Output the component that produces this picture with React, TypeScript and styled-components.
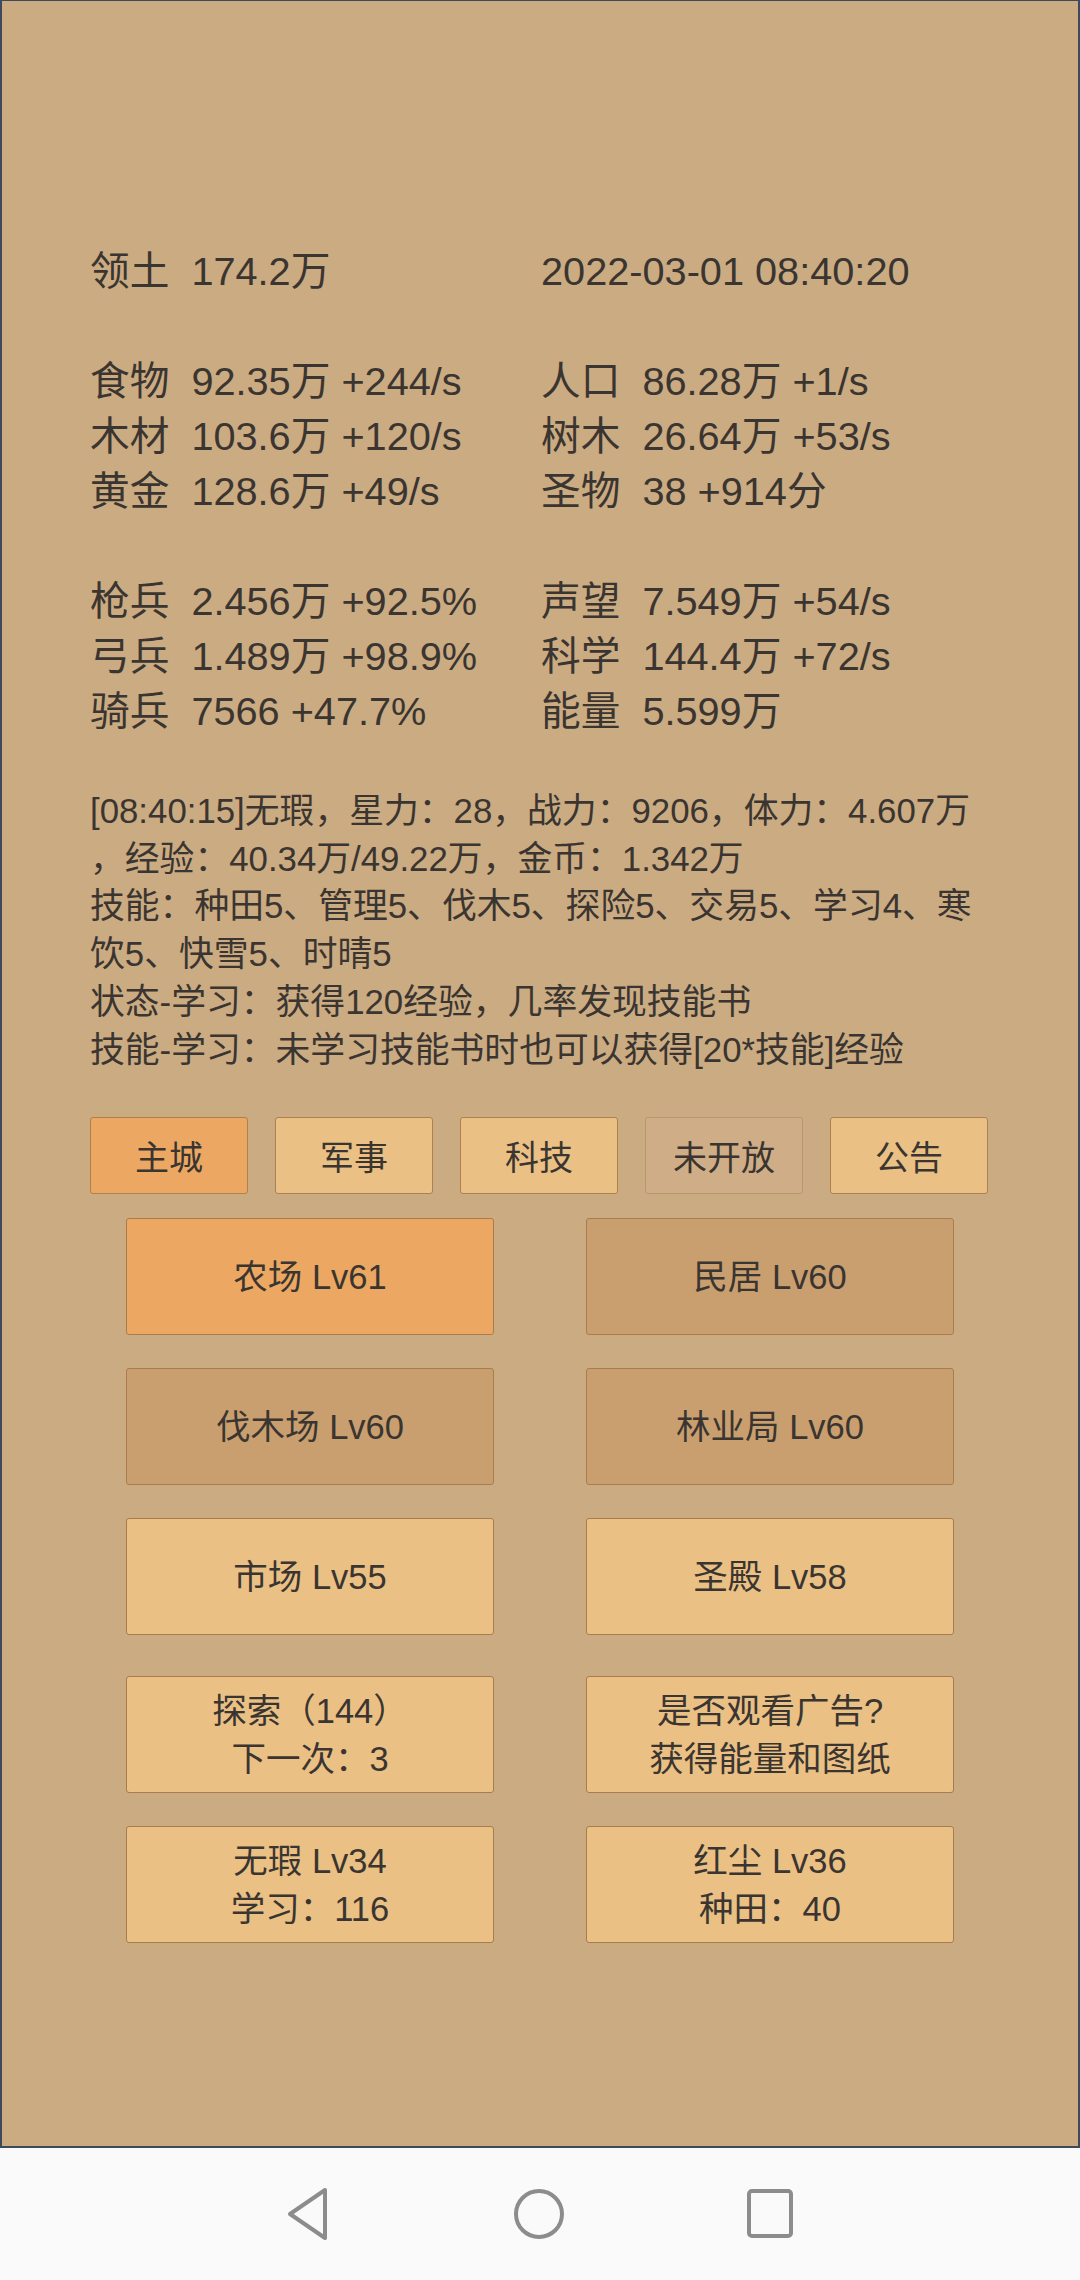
import React from 'react';
import styled, { createGlobalStyle } from 'styled-components';

const GlobalStyle = createGlobalStyle`
  html, body {
    margin: 0;
    padding: 0;
    background: #fafafa;
  }

  body {
    font-family: "Liberation Sans", "Noto Sans CJK SC", sans-serif;
    color: #3a3530;
  }

  * {
    box-sizing: border-box;
  }
`;

const Screen = styled.div`
  width: 1080px;
  height: 2280px;
  display: flex;
  flex-direction: column;
`;

const Game = styled.div`
  height: 2148px;
  background: #cbab82;
  border: 2px solid #3e4a5c;
  border-top-width: 1px;
  padding: 243px 88px 0 88px;
`;

const Stats = styled.div`
  display: flex;
  flex-direction: column;
  gap: 55px;
`;

const StatGroup = styled.div`
  display: grid;
  grid-template-columns: 451px 1fr;
  font-size: 39.7px;
  line-height: 55px;
`;

const Stat = styled.div`
  white-space: nowrap;
`;

const Label = styled.span`
  margin-right: 22px;
`;

const Log = styled.div`
  margin-top: 48px;
  font-size: 34.8px;
  line-height: 47.7px;
`;

const LogLine = styled.div`
  white-space: nowrap;
`;

const Tabs = styled.div`
  display: flex;
  justify-content: space-between;
  margin-top: 44px;
  padding-right: 2px;
`;

const Tab = styled.div<{ $tone: 'active' | 'idle' | 'locked' }>`
  width: 158px;
  height: 77px;
  display: flex;
  align-items: center;
  justify-content: center;
  font-size: 34px;
  border-radius: 3px;
  border: 1px solid ${(p) => (p.$tone === 'locked' ? '#b79670' : '#ad8050')};
  background: ${(p) => (p.$tone === 'active' ? '#eca862' : p.$tone === 'locked' ? '#cfae87' : '#eac085')};
`;

const Grid = styled.div<{ $top: number }>`
  display: grid;
  grid-template-columns: repeat(2, 368px);
  column-gap: 92px;
  row-gap: 33px;
  justify-content: center;
  margin-top: ${(p) => p.$top}px;
`;

const Building = styled.div<{ $tone: 'active' | 'idle' | 'dim' }>`
  height: 117px;
  display: flex;
  flex-direction: column;
  align-items: center;
  justify-content: center;
  font-size: 34.5px;
  line-height: 48px;
  text-align: center;
  border-radius: 3px;
  border: 1px solid #a97c4e;
  background: ${(p) => (p.$tone === 'active' ? '#eca862' : p.$tone === 'dim' ? '#c99f6f' : '#eac085')};
`;

const NavBar = styled.div`
  flex: 1;
  display: flex;
  align-items: center;
  justify-content: center;
  gap: 171px;
  padding-right: 3px;
`;

const NavIcon = styled.div`
  width: 60px;
  height: 60px;
  display: flex;
  align-items: center;
  justify-content: center;
`;

const stats = [
  [
    ['领土', '174.2万'],
    ['', '2022-03-01 08:40:20'],
  ],
  [
    ['食物', '92.35万 +244/s'],
    ['人口', '86.28万 +1/s'],
    ['木材', '103.6万 +120/s'],
    ['树木', '26.64万 +53/s'],
    ['黄金', '128.6万 +49/s'],
    ['圣物', '38 +914分'],
  ],
  [
    ['枪兵', '2.456万 +92.5%'],
    ['声望', '7.549万 +54/s'],
    ['弓兵', '1.489万 +98.9%'],
    ['科学', '144.4万 +72/s'],
    ['骑兵', '7566 +47.7%'],
    ['能量', '5.599万'],
  ],
];

const logLines = [
  '[08:40:15]无瑕，星力：28，战力：9206，体力：4.607万',
  '，经验：40.34万/49.22万，金币：1.342万',
  '技能：种田5、管理5、伐木5、探险5、交易5、学习4、寒',
  '饮5、快雪5、时晴5',
  '状态-学习：获得120经验，几率发现技能书',
  '技能-学习：未学习技能书时也可以获得[20*技能]经验',
];

const tabs: { name: string; tone: 'active' | 'idle' | 'locked' }[] = [
  { name: '主城', tone: 'active' },
  { name: '军事', tone: 'idle' },
  { name: '科技', tone: 'idle' },
  { name: '未开放', tone: 'locked' },
  { name: '公告', tone: 'idle' },
];

const buildings: { name: string; tone: 'active' | 'idle' | 'dim' }[] = [
  { name: '农场 Lv61', tone: 'active' },
  { name: '民居 Lv60', tone: 'dim' },
  { name: '伐木场 Lv60', tone: 'dim' },
  { name: '林业局 Lv60', tone: 'dim' },
  { name: '市场 Lv55', tone: 'idle' },
  { name: '圣殿 Lv58', tone: 'idle' },
];

const actions = [
  ['探索（144）', '下一次：3'],
  ['是否观看广告?', '获得能量和图纸'],
  ['无瑕 Lv34', '学习：116'],
  ['红尘 Lv36', '种田：40'],
];

export default function App() {
  return (
    <>
      <GlobalStyle />
      <Screen>
        <Game>
          <Stats>
            {stats.map((group, i) => (
              <StatGroup key={i}>
                {group.map(([label, value], j) => (
                  <Stat key={j}>
                    {label && <Label>{label}</Label>}
                    {value}
                  </Stat>
                ))}
              </StatGroup>
            ))}
          </Stats>
          <Log>
            {logLines.map((line, i) => <LogLine key={i}>{line}</LogLine>)}
          </Log>
          <Tabs>
            {tabs.map((t) => <Tab key={t.name} $tone={t.tone}>{t.name}</Tab>)}
          </Tabs>
          <Grid $top={24}>
            {buildings.map((b) => <Building key={b.name} $tone={b.tone}>{b.name}</Building>)}
          </Grid>
          <Grid $top={41}>
            {actions.map(([a, b]) => (
              <Building key={a} $tone="idle">
                <div>{a}</div>
                <div>{b}</div>
              </Building>
            ))}
          </Grid>
        </Game>
        <NavBar>
          <NavIcon>
            <svg width="46" height="56" viewBox="0 0 46 56">
              <path d="M40 4 L5 28 L40 52 Z" fill="none" stroke="#8c8c8c" strokeWidth="4" strokeLinejoin="round" />
            </svg>
          </NavIcon>
          <NavIcon>
            <svg width="54" height="54" viewBox="0 0 54 54">
              <circle cx="27" cy="27" r="23" fill="none" stroke="#8c8c8c" strokeWidth="4" />
            </svg>
          </NavIcon>
          <NavIcon>
            <svg width="48" height="52" viewBox="0 0 48 52">
              <rect x="3" y="3" width="42" height="45" rx="3" fill="none" stroke="#8c8c8c" strokeWidth="4" />
            </svg>
          </NavIcon>
        </NavBar>
      </Screen>
    </>
  );
}
